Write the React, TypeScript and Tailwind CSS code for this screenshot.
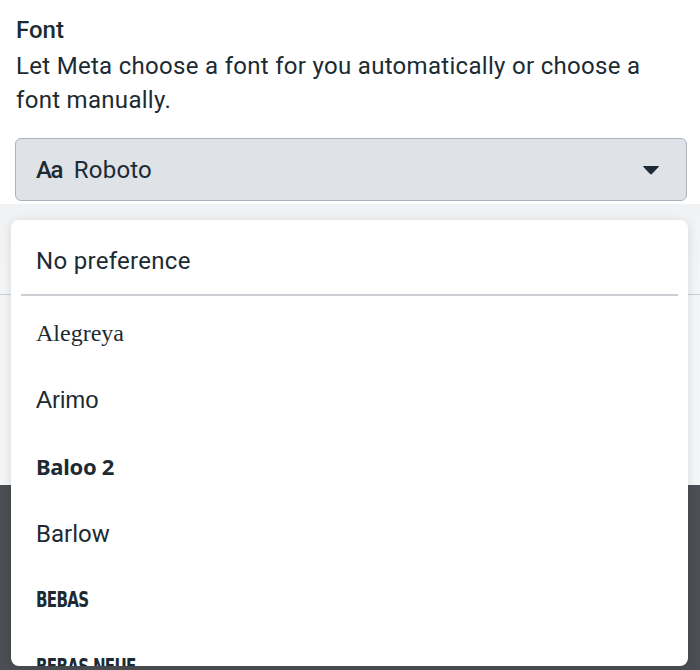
export default function App() {
  const fonts = [
    { name: "Alegreya", cls: "font-['Liberation_Serif',serif] text-[24px]" },
    { name: "Arimo", cls: "font-['Liberation_Sans',sans-serif] text-[24px]" },
    { name: "Baloo 2", cls: "font-['Noto_Sans',sans-serif] font-bold text-[22px] tracking-[-0.3px]" },
    { name: "Barlow", cls: "font-['Roboto',sans-serif] text-[24px]" },
    { name: "BEBAS", cls: "font-['DejaVu_Sans',sans-serif] font-bold text-[21px] tracking-[-1px] inline-block scale-x-[0.72] origin-left" },
    { name: "BEBAS NEUE", cls: "font-['DejaVu_Sans',sans-serif] font-bold text-[21px] tracking-[-1px] inline-block scale-x-[0.72] origin-left" },
  ];

  return (
    <div className="relative h-[670px] w-[700px] overflow-hidden bg-white font-['Roboto',sans-serif] text-[#1c2b33]">
      {/* Section header */}
      <div className="pl-4 pt-[13px]">
        <h2 className="text-[24px] font-medium leading-[34px]">Font</h2>
        <p className="mt-[2px] w-[660px] text-[24px] leading-[34px] tracking-[0.3px]">
          Let Meta choose a font for you automatically or choose a font manually.
        </p>

        {/* Select */}
        <button className="-ml-px mt-[21px] flex h-[63px] w-[672px] items-center rounded-md border border-[#aab3be] bg-[#dfe2e7] pl-5 pr-[26px]">
          <span className="text-[24px] font-medium tracking-[-1.5px]">Aa</span>
          <span className="ml-3 text-[24px] tracking-[0.2px]">Roboto</span>
          <svg className="ml-auto" width="18" height="10" viewBox="0 0 18 10">
            <path d="M1.5 1.5h15L10 8.5a1.4 1.4 0 0 1-2 0z" fill="#1c2b33" stroke="#1c2b33" strokeLinejoin="round" />
          </svg>
        </button>
      </div>

      {/* Background beneath */}
      <div className="mt-[3px] h-[90px] bg-gradient-to-b from-[#f1f2f4] to-[#f5f6f7]" />
      <div className="h-px bg-[#cdd1d6]" />
      <div className="h-[190px] bg-[#f5f6f7]" />
      <div className="h-[190px] bg-[#4b4f54]" />

      {/* Dropdown menu */}
      <div className="absolute left-[11px] top-[220px] h-[446px] w-[677px] overflow-hidden rounded-lg bg-white shadow-[0_2px_12px_rgba(0,0,0,0.12)]">
        <div className="flex h-[74px] items-center px-[25px] pt-[8px] text-[24px] tracking-[0.3px]">No preference</div>
        <div className="mx-[10px] h-[2px] bg-[#cbcfd4]" />
        <div className="pt-[3px]">
          {fonts.map((f) => (
            <div key={f.name} className="flex h-[67px] items-center px-[25px]">
              <span className={f.cls}>{f.name}</span>
            </div>
          ))}
        </div>
      </div>
    </div>
  );
}
